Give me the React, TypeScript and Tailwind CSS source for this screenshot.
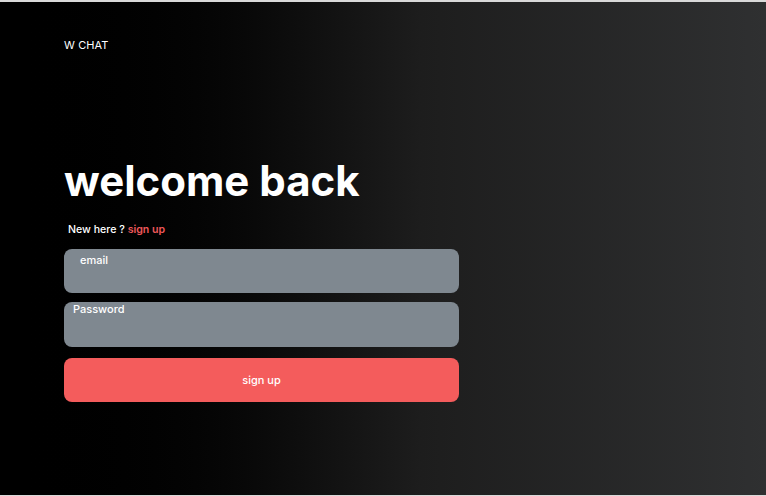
export default function App() {
  return (
    <div className="h-[496px] w-[766px] overflow-hidden border-t-2 border-b border-[#d9d9d9] bg-gradient-to-r from-black via-[#1d1d1d] via-55% to-[#2f3031] font-['Inter',sans-serif] text-white">
      <div className="flex flex-col pl-16 pt-[36px]">
        <div className="text-[11px] leading-[14px] tracking-[0.01em]">W CHAT</div>

        <h1 className="mt-[104px] text-[42px] font-bold leading-[50px]">welcome back</h1>

        <p className="mt-[17px] pl-1 text-[10.6px] font-medium leading-[14px]">
          New here ? <span className="font-semibold text-[#ee585a]">sign up</span>
        </p>

        <div className="mt-[12px] flex w-[395px] flex-col gap-[9px]">
          <div className="h-[44px] rounded-lg bg-[#7f8890] px-4 pt-[4px] text-[11px] font-medium leading-[14px]">
            email
          </div>
          <div className="h-[45px] rounded-lg bg-[#7f8890] px-[9px] text-[11px] font-medium leading-[14px]">
            Password
          </div>
          <button className="mt-[2px] flex h-[44px] items-center justify-center rounded-lg bg-[#f45c5c] text-[11px] font-medium text-white">
            sign up
          </button>
        </div>
      </div>
    </div>
  );
}
